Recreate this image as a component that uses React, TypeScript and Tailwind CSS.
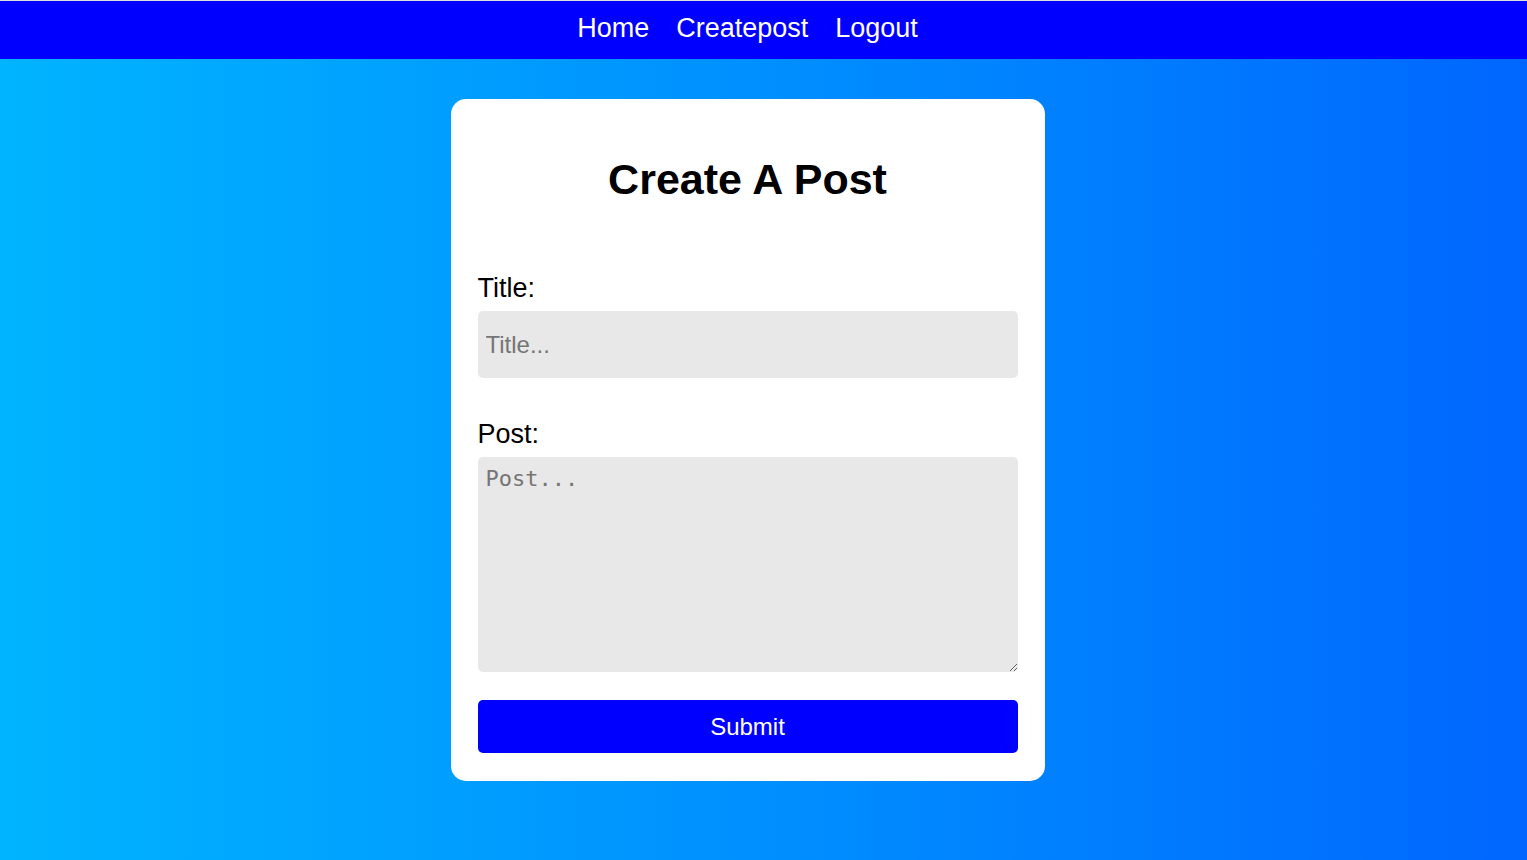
import { useState } from 'react'

export default function App() {
  const [title, setTitle] = useState('')
  const [post, setPost] = useState('')

  return (
    <div className="min-h-screen bg-gradient-to-r from-[#00b4ff] to-[#0066ff] font-['Liberation_Sans',Arial,sans-serif]">
      <nav className="border-t border-[#dedede] bg-[#0000ff] h-[59px] flex justify-center gap-[27px] pt-[14px] pr-[32px]">
        <a href="#" className="text-white text-[27px] leading-none">Home</a>
        <a href="#" className="text-white text-[27px] leading-none">Createpost</a>
        <a href="#" className="text-white text-[27px] leading-none">Logout</a>
      </nav>

      <div className="flex justify-center pt-[40px] pr-[32px]">
        <div className="w-[594px] bg-white rounded-[15px] px-[27px] pt-[59px] pb-[28px] flex flex-col">
          <h1 className="text-[43px] leading-none font-bold text-black text-center">Create A Post</h1>

          <label className="mt-[72px] text-[27px] leading-[30px] text-black">Title:</label>
          <input
            value={title}
            onChange={(e) => setTitle(e.target.value)}
            placeholder="Title..."
            className="mt-[8px] h-[67px] w-full bg-[#e8e8e8] rounded-[5px] px-2 text-[24px] outline-none placeholder:text-[#757575]"
          />

          <label className="mt-[41px] text-[27px] leading-[30px] text-black">Post:</label>
          <textarea
            value={post}
            onChange={(e) => setPost(e.target.value)}
            placeholder="Post..."
            className="mt-[8px] h-[215px] w-full bg-[#e8e8e8] rounded-[5px] px-2 pt-[9px] text-[22px] leading-[1.2] font-['DejaVu_Sans_Mono',monospace] outline-none placeholder:text-[#757575]"
          />

          <button className="mt-[28px] h-[53px] w-full bg-[#0000ff] text-white rounded-[5px] text-[24px]">
            Submit
          </button>
        </div>
      </div>
    </div>
  )
}
